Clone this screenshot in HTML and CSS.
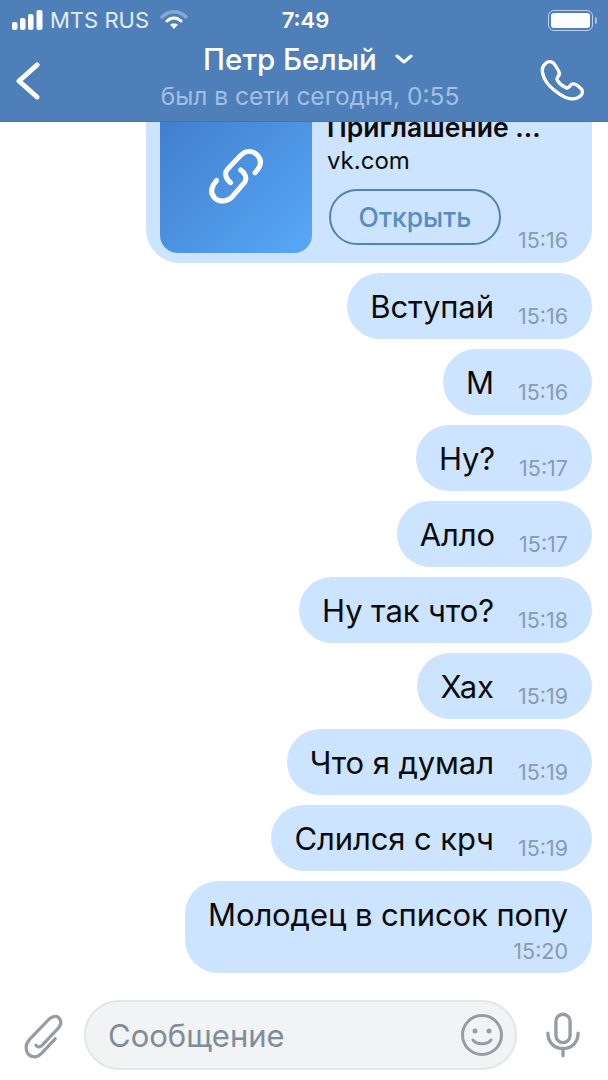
FILE: index.html
```html
<!DOCTYPE html>
<html lang="ru">
<head>
<meta charset="UTF-8" />
<meta name="viewport" content="width=device-width, initial-scale=1.0">
<title>Петр Белый</title>
<link rel="stylesheet" href="styles.css">
</head>
<body>

<header class="topbar">
  <div class="status-bar">
    <div class="status-left">
      <svg class="signal" width="32" height="20" viewBox="0 0 32 20" fill="#fff">
        <rect x="0" y="12" width="5.5" height="8" rx="2"/>
        <rect x="8" y="8" width="5.5" height="12" rx="2"/>
        <rect x="16" y="4" width="5.5" height="16" rx="2"/>
        <rect x="24.5" y="0" width="6" height="20" rx="2"/>
      </svg>
      <span>MTS RUS</span>
      <svg class="wifi" width="28" height="20" viewBox="0 0 28 20" fill="none" stroke-linecap="round">
        <path d="M2 7 C9 0 19 0 26 7" stroke="#86a9d2" stroke-width="3.5"/>
        <path d="M7 11 C11 7 17 7 21 11" stroke="#fff" stroke-width="3"/>
        <path d="M14 19 L10 14.500 C12 13 16 13 18 14.500 Z" fill="#fff"/>
      </svg>
    </div>
    <div class="status-time">7:49</div>
    <div class="status-right">
      <div class="battery"><div class="battery-fill"></div></div>
      <div class="battery-nub"></div>
    </div>
  </div>

  <div class="navbar">
    <svg class="back" width="24" height="38" viewBox="0 0 24 38" fill="none" stroke="#fff" stroke-width="5" stroke-linecap="round" stroke-linejoin="round">
      <path d="M21 3 L3 19 L21 35"/>
    </svg>
    <div class="peer">
      <div class="peer-name">
        <span>Петр Белый</span>
        <svg width="18" height="10" viewBox="0 0 18 10" fill="none" stroke="#fff" stroke-width="3" stroke-linecap="round" stroke-linejoin="round">
          <path d="M2 2 L9 8 L16 2"/>
        </svg>
      </div>
      <div class="peer-seen">был в сети сегодня, 0:55</div>
    </div>
    <svg class="call" width="64" height="60" viewBox="0 0 192 180" fill="none" stroke="#fff" stroke-width="10" stroke-linejoin="round">
      <path d="M44 40 C54 28 68 30 75 42 L86 60 C90 68 88 74 82 80 C80 83 80 85 82 88 C88 98 98 106 108 110 C112 112 116 110 119 106 C124 98 132 96 140 102 L150 110 C160 118 160 128 150 136 C135 148 112 146 90 130 C62 112 40 88 37 62 C36 54 38 46 44 40 Z"/>
    </svg>
  </div>
</header>

<main class="chat">
  <div class="bubble card">
    <div class="card-thumb">
      <svg width="72" height="72" viewBox="0 0 216 216" fill="none" stroke="#fff" stroke-width="15" stroke-linecap="round">
        <path d="M165 95 C180 80 190 62 172 42 C155 25 135 30 120 45 L82 85 C72 97 78 115 92 125"/>
        <path d="M50 118 C35 135 28 155 45 172 C60 185 82 182 97 167 L133 125 C143 112 135 95 122 87"/>
      </svg>
    </div>
    <div class="card-body">
      <div class="card-title">Приглашение ...</div>
      <div class="card-link">vk.com</div>
      <div class="card-bottom">
        <div class="open-btn">Открыть</div>
        <span class="time">15:16</span>
      </div>
    </div>
  </div>

  <div class="bubble"><span class="text">Вступай</span><span class="time">15:16</span></div>
  <div class="bubble"><span class="text">М</span><span class="time">15:16</span></div>
  <div class="bubble"><span class="text">Ну?</span><span class="time">15:17</span></div>
  <div class="bubble"><span class="text">Алло</span><span class="time">15:17</span></div>
  <div class="bubble"><span class="text">Ну так что?</span><span class="time">15:18</span></div>
  <div class="bubble"><span class="text">Хах</span><span class="time">15:19</span></div>
  <div class="bubble"><span class="text">Что я думал</span><span class="time">15:19</span></div>
  <div class="bubble"><span class="text">Слился с крч</span><span class="time">15:19</span></div>
  <div class="bubble long">
    <span class="text">Молодец в список попу</span>
    <span class="time">15:20</span>
  </div>
</main>

<footer class="composer">
  <svg class="clip" width="54" height="54" viewBox="0 0 168 168" fill="none" stroke="#959ca5" stroke-width="10" stroke-linecap="round" stroke-linejoin="round">
    <path d="M128 102 L85 148 C70 163 50 160 42 146 C35 132 38 115 50 102 L108 42 C120 30 135 28 142 40 C150 52 145 62 135 72 L88 122 C80 130 72 128 68 122"/>
  </svg>
  <div class="message-field">
    <span class="placeholder">Сообщение</span>
    <svg width="44" height="44" viewBox="0 0 44 44" fill="none" stroke="#959ca5" stroke-width="3" stroke-linecap="round">
      <circle cx="22" cy="22" r="19.500"/>
      <circle cx="15" cy="18" r="2.500" fill="#959ca5" stroke="none"/>
      <circle cx="29" cy="18" r="2.500" fill="#959ca5" stroke="none"/>
      <path d="M13 27 C17 32 27 32 31 27"/>
    </svg>
  </div>
  <svg class="mic" width="34" height="48" viewBox="0 0 36 48" fill="none" stroke="#959ca5" stroke-width="3.500" stroke-linecap="round">
    <rect x="10.500" y="2" width="15" height="30" rx="7.500"/>
    <path d="M2 22 C2 44 34 44 34 22"/>
    <path d="M18 38 V46"/>
  </svg>
</footer>

</body>
</html>
```

FILE: styles.css
```css
html, body {
  height: 100%;
}

body {
  margin: 0;
  display: flex;
  flex-direction: column;
  height: 1080px;
  overflow: hidden;
  background: #fff;
  font-family: Inter, 'Liberation Sans', sans-serif;
  color: #0b0b0c;
}

.topbar {
  flex: none;
  z-index: 1;
  height: 122px;
  box-sizing: border-box;
  background: #4e7fb9;
  border-bottom: 1px solid #4573ab;
  color: #fff;
}

.status-bar {
  display: grid;
  grid-template-columns: 1fr auto 1fr;
  align-items: center;
  height: 40px;
  padding: 0 11px 0 12px;
  font-size: 22px;
}

.status-left {
  display: flex;
  align-items: center;
  gap: 6px;
  color: #e4edf7;
}

.wifi {
  margin-left: 5px;
}

.status-time {
  font-weight: 600;
  padding-left: 2px;
}

.status-right {
  display: flex;
  align-items: center;
  justify-content: flex-end;
  gap: 2px;
}

.battery {
  box-sizing: border-box;
  width: 45px;
  height: 21px;
  padding: 2px;
  border: 1px solid #bcd1e9;
  border-radius: 6px;
}

.battery-fill {
  height: 100%;
  background: #fff;
  border-radius: 3px;
}

.battery-nub {
  width: 2px;
  height: 7px;
  background: #a9c4e2;
  border-radius: 0 2px 2px 0;
}

.navbar {
  display: flex;
  align-items: center;
  height: 81px;
  padding: 0 14px 0 16px;
}

.back {
  flex: none;
}

.peer {
  flex: 1;
  text-align: center;
  margin-top: -10px;
  padding-left: 50px;
}

.peer-name {
  display: flex;
  align-items: center;
  justify-content: center;
  gap: 18px;
  height: 38px;
  margin-right: 4px;
  font-size: 29.500px;
  font-weight: 500;
}

.peer-seen {
  margin-top: 3px;
  font-size: 24.500px;
  color: #a1c0e4;
}

.call {
  flex: none;
}

.chat {
  flex: 1;
  min-height: 0;
  overflow: hidden;
  display: flex;
  flex-direction: column;
  justify-content: flex-end;
  align-items: flex-end;
  gap: 10px;
  padding: 0 16px 27px 16px;
}

.bubble {
  flex: none;
  display: flex;
  align-items: center;
  height: 66px;
  box-sizing: border-box;
  padding: 0 24px 0 23px;
  background: #cce4ff;
  border-radius: 33px;
}

.text {
  font-size: 31px;
  letter-spacing: -0.1px;
}

.time {
  font-size: 21.500px;
  color: #8a9bad;
  margin-left: 24px;
  padding-top: 20px;
}

.long {
  flex-direction: column;
  align-items: flex-end;
  height: 92px;
  padding-top: 15px;
}

.long .time {
  margin: 0;
  padding: 5px 0 0;
}

.card {
  align-items: stretch;
  width: 446px;
  height: 172px;
  padding: 10px 24px 10px 14px;
  border-radius: 34px;
}

.card-thumb {
  flex: none;
  width: 152px;
  display: flex;
  align-items: center;
  justify-content: center;
  background: linear-gradient(135deg, #3f7ccb, #58a8f6);
  border-radius: 18px;
}

.card-body {
  flex: 1;
  margin-left: 15px;
  display: flex;
  flex-direction: column;
}

.card-title {
  font-size: 26.500px;
  font-weight: 600;
  margin-top: 10px;
}

.card-link {
  font-size: 24px;
  margin-top: 3px;
}

.card-bottom {
  display: flex;
  align-items: flex-end;
  justify-content: space-between;
  margin-top: 14px;
  padding-left: 2px;
}

.card .time {
  margin: 0 0 -8px;
  padding: 0;
}

.open-btn {
  box-sizing: border-box;
  width: 172px;
  height: 56px;
  line-height: 52px;
  text-align: center;
  font-size: 26.500px;
  font-weight: 500;
  color: #5a8bc2;
  border: 2px solid #5181b8;
  border-radius: 28px;
}

.composer {
  flex: none;
  display: flex;
  align-items: center;
  height: 80px;
  padding: 0 28px 10px 14px;
  box-sizing: border-box;
}

.clip {
  flex: none;
  margin-top: -4px;
}

.message-field {
  flex: 1;
  display: flex;
  align-items: center;
  justify-content: space-between;
  box-sizing: border-box;
  height: 70px;
  margin: 0 29px 0 16px;
  padding: 0 11px 0 22px;
  background: #f2f3f5;
  border: 2px solid #e3e5e8;
  border-radius: 35px;
}

.placeholder {
  font-size: 31px;
  color: #818c99;
}

.mic {
  flex: none;
}
```
